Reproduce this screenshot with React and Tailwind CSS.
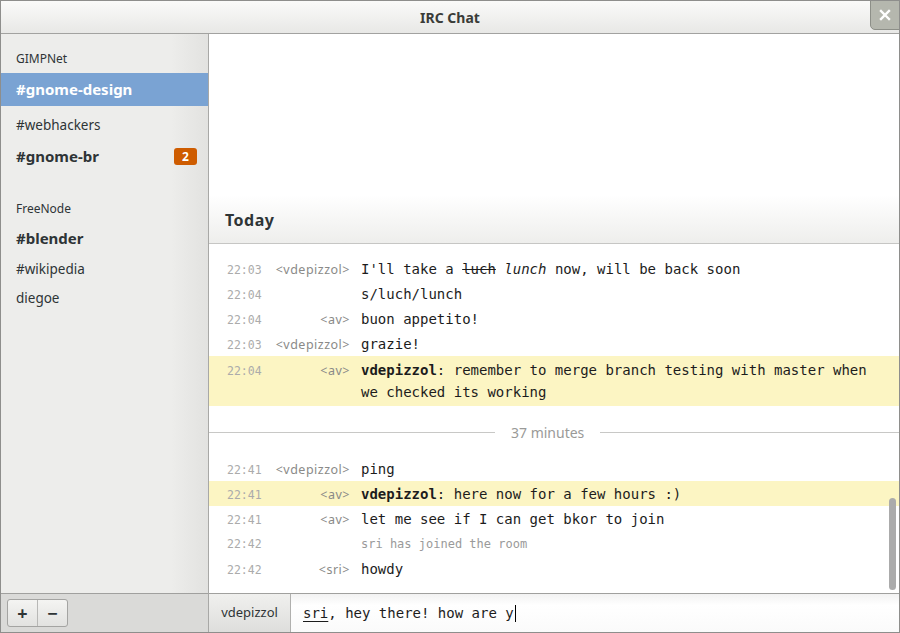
const sans = "font-['Noto_Sans',sans-serif]";
const mono = "font-['DejaVu_Sans_Mono',monospace]";

const before = [
  {
    t: "22:03",
    n: "<vdepizzol>",
    m: (
      <>
        I'll take a <span className="line-through">luch</span> <i>lunch</i> now, will be back soon
      </>
    ),
  },
  { t: "22:04", n: "", m: "s/luch/lunch" },
  { t: "22:04", n: "<av>", m: "buon appetito!" },
  { t: "22:03", n: "<vdepizzol>", m: "grazie!" },
  {
    t: "22:04",
    n: "<av>",
    hl: true,
    wide: true,
    m: (
      <>
        <b>vdepizzol</b>: remember to merge branch testing with master when we checked its working
      </>
    ),
  },
];

const after = [
  { t: "22:41", n: "<vdepizzol>", m: "ping" },
  {
    t: "22:41",
    n: "<av>",
    hl: true,
    m: (
      <>
        <b>vdepizzol</b>: here now for a few hours :)
      </>
    ),
  },
  { t: "22:41", n: "<av>", m: "let me see if I can get bkor to join" },
  { t: "22:42", n: "", sys: true, m: "sri has joined the room" },
  { t: "22:42", n: "<sri>", m: "howdy" },
];

function Row({ r }) {
  return (
    <div
      className={
        "flex items-baseline pl-[18px] pr-[18px] " +
        (r.hl ? "bg-[#fcf5c3] " : "") +
        (r.wide ? "py-[3px]" : "py-[1.5px]")
      }
    >
      <span className={mono + " w-[35px] shrink-0 text-[11.5px] text-[#ababab]"}>{r.t}</span>
      <span className={sans + " w-[88px] shrink-0 text-right text-[12.5px] tracking-[0.5px] text-[#8a8a88]"}>
        {r.n}
      </span>
      {r.sys ? (
        <span className={mono + " ml-[11px] flex-1 text-[12px] leading-[22px] text-[#9a9a9a]"}>{r.m}</span>
      ) : (
        <span className={mono + " ml-[11px] flex-1 text-[14px] leading-[22px] text-[#1c1c1c]"}>{r.m}</span>
      )}
    </div>
  );
}

function Channel({ name, bold, badge, selected, className = "" }) {
  return (
    <div
      className={
        "flex items-center pl-[15px] pr-[11px] " +
        (selected ? "h-[33px] bg-[#7aa3d3] text-white " : "h-[31px] text-[#2e3436] ") +
        className
      }
    >
      <span className={(bold ? "font-bold text-[15px] " : "text-[13.5px] ") + "flex-1"}>{name}</span>
      {badge && (
        <span className="flex h-[17px] w-[23px] items-center justify-center rounded-[3px] bg-[#ce5c00] text-[12px] font-bold text-white">
          {badge}
        </span>
      )}
    </div>
  );
}

export default function App() {
  return (
    <div className={sans + " flex h-[633px] w-[900px] flex-col overflow-hidden border border-[#8e8e8c] bg-white text-[#2e3436]"}>
      {/* title bar */}
      <div className="relative flex h-[33px] shrink-0 items-center justify-center border-b border-[#a2a2a0] bg-[linear-gradient(to_bottom,#fafaf9,#e8e8e6)]">
        <span className="text-[14px] font-bold text-[#3a3c38]">IRC Chat</span>
        <div className="absolute -top-px right-[-1px] flex h-[30px] w-[30px] items-center justify-center rounded-bl-[5px] border border-[#8d8f88] bg-[#b5b7ae]">
          <svg width="12" height="12" viewBox="0 0 12 12">
            <path d="M2 2 L10 10 M10 2 L2 10" stroke="white" strokeWidth="2.4" strokeLinecap="square" />
          </svg>
        </div>
      </div>

      <div className="flex flex-1 overflow-hidden">
        {/* sidebar */}
        <div className="flex w-[208px] shrink-0 flex-col border-r border-[#a8a8a6]">
          <div className="flex-1 bg-[linear-gradient(to_right,#ededeb_82%,#e2e2e0)]">
            <div className="flex h-[39px] items-end pb-[6px] pl-[15px] text-[12px] leading-[16px]">GIMPNet</div>
            <Channel name="#gnome-design" bold selected />
            <Channel name="#webhackers" className="mt-[4px]" />
            <Channel name="#gnome-br" bold badge="2" />
            <div className="flex h-[51px] items-end pb-[6px] pl-[15px] text-[12px] leading-[16px]">FreeNode</div>
            <Channel name="#blender" bold />
            <Channel name="#wikipedia" />
            <Channel name="diegoe" className="-mt-[2px]" />
          </div>
          <div className="flex h-[39px] items-center border-t border-[#a0a09e] bg-[#dadad8] pl-[6px]">
            <div className="flex h-[28px] overflow-hidden rounded-[3px] border border-[#a4a4a2] bg-[linear-gradient(to_bottom,#f4f4f2,#e2e2e0)]">
              <div className="flex w-[30px] items-center justify-center border-r border-[#b8b8b6] text-[18px] font-bold leading-none text-[#2e3436]">
                +
              </div>
              <div className="flex w-[29px] items-center justify-center text-[18px] font-bold leading-none text-[#2e3436]">
                −
              </div>
            </div>
          </div>
        </div>

        {/* main */}
        <div className="flex flex-1 flex-col">
          <div className="flex-1" />
          <div className="flex h-[49px] shrink-0 items-center border-b border-[#c6c6c4] bg-[linear-gradient(to_bottom,#ffffff,#eeeeec)] pl-[16px] pt-[2px]">
            <span className="text-[16px] font-bold tracking-[0.5px] text-[#2e3436]">Today</span>
          </div>
          <div className="relative h-[349px] shrink-0 pt-[12px]">
            {before.map((r, i) => (
              <Row key={i} r={r} />
            ))}
            <div className="flex h-[50px] items-center pt-[2px]">
              <div className="h-px w-[286px] bg-[#c8c8c6]" />
              <span className="px-[16px] text-[14px] text-[#9a9a98]">37 minutes</span>
              <div className="h-px flex-1 bg-[#c8c8c6]" />
            </div>
            {after.map((r, i) => (
              <Row key={i} r={r} />
            ))}
            <div className="absolute right-[3px] top-[254px] h-[92px] w-[7px] rounded-full bg-[#ababab]" />
          </div>
          <div className="flex h-[39px] shrink-0 border-t border-[#a0a09e]">
            <div className="flex w-[82px] items-center justify-center border-r border-[#b0b0ae] bg-[linear-gradient(to_bottom,#f0f0ee,#dededc)] text-[13px] text-[#2e3436]">
              vdepizzol
            </div>
            <div className="flex flex-1 items-center bg-[linear-gradient(to_bottom,#f2f2f2,#ffffff_30%,#fafafa)] pl-[12px]">
              <span className={mono + " text-[14px] text-[#1c1c1c]"}>
                <span className="underline underline-offset-[3px]">sri</span>, hey there! how are y
              </span>
              <span className="ml-px h-[17px] w-px bg-black" />
            </div>
          </div>
        </div>
      </div>
    </div>
  );
}
